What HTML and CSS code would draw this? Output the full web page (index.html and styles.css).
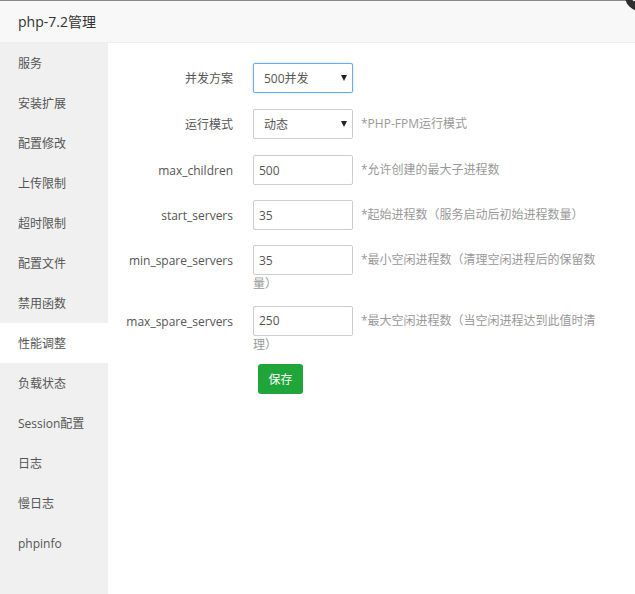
FILE: index.html
```html
<!DOCTYPE html>
<html lang="zh-CN">
<head>
<meta charset="utf-8">
<title>php-7.2管理</title>
<link rel="stylesheet" href="styles.css">
</head>
<body>
<div class="layer">
  <div class="layer-title">php-7.2管理</div>
  <span class="layer-close" aria-label="关闭">
    <svg width="30" height="30" viewBox="0 0 30 30"><circle cx="15" cy="15" r="15" fill="#2f2f2f"/><path d="M9 19 L21 7" stroke="#fff" stroke-width="2.4" stroke-linecap="round"/></svg>
  </span>
  <div class="layer-body">
    <ul class="side-menu">
      <li>服务</li>
      <li>安装扩展</li>
      <li>配置修改</li>
      <li>上传限制</li>
      <li>超时限制</li>
      <li>配置文件</li>
      <li>禁用函数</li>
      <li class="active">性能调整</li>
      <li>负载状态</li>
      <li>Session配置</li>
      <li>日志</li>
      <li>慢日志</li>
      <li>phpinfo</li>
    </ul>
    <div class="content">
      <div class="line">
        <span class="tname">并发方案</span>
        <div class="info-r">
          <span class="select-wrap"><select class="bt-select focus"><option>500并发</option></select><i class="caret"></i></span>
        </div>
      </div>
      <div class="line">
        <span class="tname">运行模式</span>
        <div class="info-r">
          <span class="select-wrap"><select class="bt-select"><option>动态</option></select><i class="caret"></i></span><span class="help">*PHP-FPM运行模式</span>
        </div>
      </div>
      <div class="line">
        <span class="tname">max_children</span>
        <div class="info-r">
          <input class="bt-input" type="text" value="500"><span class="help">*允许创建的最大子进程数</span>
        </div>
      </div>
      <div class="line">
        <span class="tname">start_servers</span>
        <div class="info-r">
          <input class="bt-input" type="text" value="35"><span class="help">*起始进程数（服务启动后初始进程数量）</span>
        </div>
      </div>
      <div class="line">
        <span class="tname">min_spare_servers</span>
        <div class="info-r">
          <input class="bt-input" type="text" value="35"><span class="help">*最小空闲进程数（清理空闲进程后的保留数量）</span>
        </div>
      </div>
      <div class="line">
        <span class="tname">max_spare_servers</span>
        <div class="info-r">
          <input class="bt-input" type="text" value="250"><span class="help">*最大空闲进程数（当空闲进程达到此值时清理）</span>
        </div>
      </div>
      <div class="line">
        <span class="tname"></span>
        <div class="info-r">
          <button class="btn-save" type="button">保存</button>
        </div>
      </div>
    </div>
  </div>
</div>
</body>
</html>
```

FILE: styles.css
```css
* { box-sizing: border-box; }
html, body { margin: 0; padding: 0; }
body {
  width: 635px;
  height: 594px;
  overflow: hidden;
  background: #fff;
  font-family: "Open Sans", "Noto Sans CJK SC", sans-serif;
  color: #555;
}
.layer {
  position: relative;
  height: 594px;
  border-top: 1px solid #8a8a8a;
  display: flex;
  flex-direction: column;
}
.layer-title {
  height: 42px;
  line-height: 42px;
  padding-left: 18px;
  font-size: 14px;
  color: #333;
  background: #f8f8f8;
  border-bottom: 1px solid #eee;
}
.layer-close {
  position: absolute;
  right: -20px;
  top: -20px;
  width: 30px;
  height: 30px;
}
.layer-close svg { display: block; }
.layer-body {
  flex: 1;
  display: flex;
}
.side-menu {
  list-style: none;
  margin: 0;
  padding: 0;
  width: 108px;
  background: #f0f0f0;
}
.side-menu li {
  height: 40px;
  line-height: 40px;
  padding-top: 1px;
  padding-left: 18px;
  font-size: 12px;
  color: #555;
}
.side-menu li.active { background: #fff; }
.content {
  flex: 1;
  padding: 20px 35px 0 0;
}
.line {
  display: flex;
  margin-bottom: 15px;
}
.line + .line + .line { margin-top: 1px; margin-bottom: 14px; }
.tname {
  flex: none;
  width: 125px;
  margin-right: 20px;
  padding-top: 1px;
  text-align: right;
  line-height: 30px;
  font-size: 12px;
  color: #555;
}
.info-r {
  flex: 1;
  font-size: 12px;
  line-height: 16px;
}
.select-wrap {
  position: relative;
  display: inline-block;
  vertical-align: middle;
}
.bt-select {
  -webkit-appearance: none;
  appearance: none;
  display: block;
  width: 100px;
  height: 30px;
  padding: 0 0 0 10px;
  margin: 0;
  border: 1px solid #ccc;
  border-radius: 2px;
  background: #fff;
  font-family: inherit;
  font-size: 12px;
  color: #555;
  outline: none;
}
.bt-select.focus {
  border-color: #6aaef0;
  box-shadow: 0 0 2px rgba(102, 175, 233, 0.6);
}
.caret {
  position: absolute;
  right: 6px;
  top: 12px;
  width: 0;
  height: 0;
  border-left: 3.5px solid transparent;
  border-right: 3.5px solid transparent;
  border-top: 6px solid #222;
  pointer-events: none;
}
.bt-input {
  display: inline-block;
  vertical-align: middle;
  width: 100px;
  height: 30px;
  margin: 0;
  padding: 0 5px;
  border: 1px solid #ccc;
  border-radius: 2px;
  font-family: inherit;
  font-size: 12px;
  color: #555;
  outline: none;
}
.help {
  margin-left: 8px;
  color: #999;
  vertical-align: middle;
}
.btn-save {
  margin-left: 5px;
  margin-top: -3px;
  width: 45px;
  height: 30px;
  padding: 0;
  border: 0;
  border-radius: 3px;
  background: #20a53a;
  color: #fff;
  font-family: inherit;
  font-size: 12px;
}
```
